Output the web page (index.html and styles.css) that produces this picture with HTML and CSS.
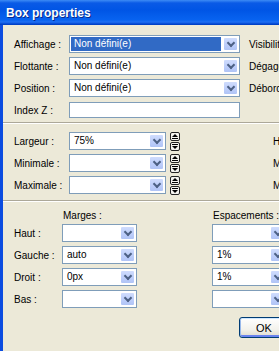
FILE: index.html
```html
<!DOCTYPE html>
<html lang="fr">
<head>
    <meta charset="UTF-8">
    <title>Box properties</title>
    <link rel="stylesheet" href="styles.css">
</head>
<body>
    <div class="window">
        <div class="titlebar"><span class="title">Box properties</span></div>
        <div class="frame">
            <div class="section general">
                <span class="lbl">Affichage :</span>
                <div class="combo focused"><span class="value">Non défini(e)</span><span class="arrow"></span></div>
                <span class="lbl">Visibilité :</span>
                <div class="combo"><span class="value"></span><span class="arrow"></span></div>

                <span class="lbl">Flottante :</span>
                <div class="combo"><span class="value">Non défini(e)</span><span class="arrow"></span></div>
                <span class="lbl">Dégagement :</span>
                <div class="combo"><span class="value"></span><span class="arrow"></span></div>

                <span class="lbl">Position :</span>
                <div class="combo"><span class="value">Non défini(e)</span><span class="arrow"></span></div>
                <span class="lbl">Débordement :</span>
                <div class="combo"><span class="value"></span><span class="arrow"></span></div>

                <span class="lbl">Index Z :</span>
                <div class="textbox"></div>
            </div>

            <div class="separator"></div>

            <div class="section sizes">
                <span class="lbl">Largeur :</span>
                <div class="combo"><span class="value">75%</span><span class="arrow"></span></div>
                <div class="spinner"><span class="spin up"></span><span class="spin down"></span></div>
                <span class="lbl">Hauteur :</span>

                <span class="lbl">Minimale :</span>
                <div class="combo"><span class="value"></span><span class="arrow"></span></div>
                <div class="spinner"><span class="spin up"></span><span class="spin down"></span></div>
                <span class="lbl">Minimale :</span>

                <span class="lbl">Maximale :</span>
                <div class="combo"><span class="value"></span><span class="arrow"></span></div>
                <div class="spinner"><span class="spin up"></span><span class="spin down"></span></div>
                <span class="lbl">Maximale :</span>
            </div>

            <div class="separator second"></div>

            <div class="section spacing">
                <span></span>
                <span class="head">Marges :</span>
                <span></span>
                <span class="head">Espacements :</span>

                <span class="lbl">Haut :</span>
                <div class="combo"><span class="value"></span><span class="arrow"></span></div>
                <span></span>
                <div class="combo"><span class="value"></span><span class="arrow"></span></div>

                <span class="lbl">Gauche :</span>
                <div class="combo"><span class="value">auto</span><span class="arrow"></span></div>
                <span></span>
                <div class="combo"><span class="value">1%</span><span class="arrow"></span></div>

                <span class="lbl">Droit :</span>
                <div class="combo"><span class="value">0px</span><span class="arrow"></span></div>
                <span></span>
                <div class="combo"><span class="value">1%</span><span class="arrow"></span></div>

                <span class="lbl">Bas :</span>
                <div class="combo"><span class="value"></span><span class="arrow"></span></div>
                <span></span>
                <div class="combo"><span class="value"></span><span class="arrow"></span></div>
            </div>

            <div class="footer">
                <button class="btn default">OK</button>
                <button class="btn">Annuler</button>
            </div>
        </div>
    </div>
</body>
</html>
```

FILE: styles.css
```css
body {
    margin: 0;
    overflow: hidden;
    background-color: #ece9d8;
    font-family: "Liberation Sans", Arial, sans-serif;
    font-size: 10px;
    color: #000;
}
.window {
    width: 460px;
}
.titlebar {
    height: 25px;
    display: flex;
    align-items: center;
    padding-left: 6px;
    background: linear-gradient(180deg, #3d8cf5 0, #0a5ae6 3px, #0055e5 40%, #0863f0 80%, #1f6ff2 88%, #0045d0 96%, #003cbc 100%);
}
.title {
    color: #fff;
    font-weight: bold;
    font-size: 12px;
    text-shadow: 1px 1px #0a2a8a;
}
.frame {
    border-left: 3px solid #0b4ce0;
    padding: 8px 0 20px 11px;
    background-color: #ece9d8;
}
.section {
    display: grid;
    grid-auto-rows: 22px;
    align-items: center;
}
.general {
    grid-template-columns: 55px 171px 9px 80px 120px;
}
.general .lbl:nth-child(4n+3) {
    grid-column: 4;
}
.general .combo:nth-child(4n+4) {
    grid-column: 5;
}
.sizes {
    grid-template-columns: 55px 97px 4px 10px 93px 80px;
}
.sizes .spinner {
    grid-column: 4;
}
.sizes .lbl:nth-child(4n) {
    grid-column: 6;
}
.spacing {
    grid-template-columns: 48px 75px 75px 75px;
    grid-template-rows: 14px;
}
.head {
    padding-left: 1px;
}
.lbl {
    white-space: nowrap;
}
.combo {
    height: 18px;
    box-sizing: border-box;
    border: 1px solid #7f9db9;
    background-color: #fff;
    display: flex;
    align-items: stretch;
}
.combo .value {
    flex: 1;
    padding-left: 3px;
    line-height: 14px;
    margin: 1px;
    white-space: nowrap;
}
.combo.focused .value {
    background-color: #316ac5;
    color: #fff;
}
.arrow {
    width: 15px;
    margin: 1px;
    box-sizing: border-box;
    border: 1px solid #fff;
    border-radius: 2px;
    background: linear-gradient(180deg, #cfdcfd 0%, #bccdfa 60%, #b0c4f6 100%);
    display: flex;
    align-items: center;
    justify-content: center;
}
.arrow::before {
    content: "";
    width: 4px;
    height: 4px;
    border-right: 2px solid #4d6185;
    border-bottom: 2px solid #4d6185;
    transform: translateY(-1px) rotate(45deg);
}
.textbox {
    height: 16px;
    box-sizing: border-box;
    border: 1px solid #7f9db9;
    background-color: #fff;
}
.separator {
    height: 1px;
    border-top: 1px solid #aca899;
    background-color: #fff;
    margin: 1px 0 6px -11px;
}
.separator.second {
    margin: 4px 0 6px -11px;
}
.spinner {
    display: flex;
    flex-direction: column;
    gap: 1px;
}
.spin {
    width: 10px;
    height: 9px;
    box-sizing: border-box;
    border: 1px solid #222;
    border-radius: 2px;
    background-color: #f4f3ee;
    position: relative;
}
.spin::before {
    content: "";
    position: absolute;
    left: 1px;
    border-left: 3px solid transparent;
    border-right: 3px solid transparent;
}
.spin::after {
    content: "";
    position: absolute;
    left: 1px;
    width: 6px;
    height: 1px;
    background-color: #000;
}
.spin.up::before {
    top: 1px;
    border-bottom: 3px solid #000;
}
.spin.up::after {
    top: 5px;
}
.spin.down::before {
    top: 3px;
    border-top: 3px solid #000;
}
.spin.down::after {
    top: 1px;
}
.footer {
    display: flex;
    gap: 6px;
    margin-top: 7px;
    padding-left: 225px;
}
.btn {
    width: 50px;
    height: 21px;
    padding: 0;
    font-family: inherit;
    font-size: 11px;
    color: #000;
    border: 1px solid #003c74;
    border-radius: 3px;
    background: linear-gradient(180deg, #ffffff 0%, #f3f2ec 60%, #e3e0d4 90%, #d6d0c5 100%);
}
.btn.default {
    box-shadow: inset 0 1px #cee7ff, inset 1px 0 #98b8ea, inset -1px 0 #98b8ea, inset 0 -2px #6982ee;
}
```
